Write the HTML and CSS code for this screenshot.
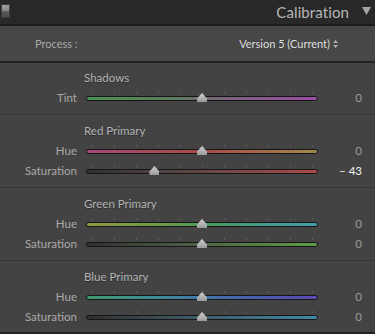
FILE: index.html
```html
<!DOCTYPE html>
<html>
<head>
<meta charset="utf-8">
<link rel="stylesheet" href="styles.css">
</head>
<body>
<div class="panel">
  <div class="header">
    <span class="hdr-icon"></span>
    <span class="title">Calibration</span>
    <svg class="caret" width="9" height="8" viewBox="0 0 9 8"><path d="M0 0 H9 L4.5 8 Z" fill="#a4a4a4"/></svg>
  </div>
  <div class="process">
    <span class="proc-label">Process :</span>
    <span class="proc-value">Version 5 (Current)
      <svg class="updown" width="5" height="8" viewBox="0 0 5 8"><path d="M0 3 L2.5 0 L5 3 Z M0 5 L2.5 8 L5 5 Z" fill="#b0b0b0"/></svg>
    </span>
  </div>

  <div class="section first">
    <div class="sec-title">Shadows</div>
    <div class="row">
      <span class="lbl">Tint</span>
      <div class="slider"><div class="bar g-tint"></div><div class="ticks"></div><span class="thumb" style="left:50%"></span></div>
      <span class="val">0</span>
    </div>
  </div>

  <div class="section">
    <div class="sec-title">Red Primary</div>
    <div class="row">
      <span class="lbl">Hue</span>
      <div class="slider"><div class="bar g-rh"></div><div class="ticks"></div><span class="thumb" style="left:50%"></span></div>
      <span class="val">0</span>
    </div>
    <div class="row">
      <span class="lbl">Saturation</span>
      <div class="slider"><div class="bar g-rs"></div><div class="ticks"></div><span class="thumb" style="left:29.5%"></span></div>
      <span class="val active">– 43</span>
    </div>
  </div>

  <div class="section">
    <div class="sec-title">Green Primary</div>
    <div class="row">
      <span class="lbl">Hue</span>
      <div class="slider"><div class="bar g-gh"></div><div class="ticks"></div><span class="thumb" style="left:50%"></span></div>
      <span class="val">0</span>
    </div>
    <div class="row">
      <span class="lbl">Saturation</span>
      <div class="slider"><div class="bar g-gs"></div><div class="ticks"></div><span class="thumb" style="left:50%"></span></div>
      <span class="val">0</span>
    </div>
  </div>

  <div class="section last">
    <div class="sec-title">Blue Primary</div>
    <div class="row">
      <span class="lbl">Hue</span>
      <div class="slider"><div class="bar g-bh"></div><div class="ticks"></div><span class="thumb" style="left:50%"></span></div>
      <span class="val">0</span>
    </div>
    <div class="row">
      <span class="lbl">Saturation</span>
      <div class="slider"><div class="bar g-bs"></div><div class="ticks"></div><span class="thumb" style="left:50%"></span></div>
      <span class="val">0</span>
    </div>
  </div>
</div>
</body>
</html>
```
FILE: styles.css
```css
html, body {
  margin: 0;
  padding: 0;
  background: #434343;
}
body {
  width: 375px;
  height: 334px;
  overflow: hidden;
  font-family: Lato, "Open Sans", sans-serif;
}
.panel {
  width: 375px;
  height: 334px;
  display: flex;
  flex-direction: column;
  background: #434343;
  border-bottom: 2px solid #222;
  box-sizing: border-box;
}
.header {
  height: 24px;
  background: #282828;
  border-bottom: 2px solid #1b1b1b;
  display: flex;
  align-items: center;
  padding: 0 3px 0 1px;
  flex: none;
}
.hdr-icon {
  width: 7px;
  height: 12px;
  border: 1px solid #3e3e3e;
  background: linear-gradient(#a0a0a0 0, #8a8a8a 45%, #5a5a5a 55%, #4c4c4c 100%);
  margin-top: -2px;
}
.title {
  margin-left: auto;
  color: #b6b6b6;
  font-size: 15px;
  letter-spacing: 0.1px;
  margin-top: -1px;
}
.caret {
  margin-left: 13px;
  margin-right: 1px;
  margin-top: -2px;
}
.process {
  height: 35px;
  background: #474747;
  border-bottom: 2px solid #222;
  display: flex;
  align-items: center;
  font-size: 11px;
  flex: none;
}
.proc-label {
  margin-left: 35px;
  color: #a9a9a9;
}
.proc-value {
  margin-left: auto;
  margin-right: 37px;
  color: #dedede;
  display: flex;
  align-items: center;
  gap: 3px;
}
.section {
  padding: 6px 13px 6px 0;
  border-bottom: 1px solid #383838;
  flex: none;
}
.section.first {
  padding-top: 5px;
}
.section.last {
  border-bottom: none;
  flex: 1;
}
.sec-title {
  height: 20px;
  line-height: 20px;
  margin-left: 84px;
  font-size: 11.5px;
  color: #b4b4b4;
  text-shadow: 0 1px 0 #2e2e2e;
}
.row {
  height: 20px;
  display: grid;
  grid-template-columns: 77px 232px 1fr;
  column-gap: 9px;
  align-items: center;
}
.lbl {
  text-align: right;
  font-size: 11.5px;
  color: #a9a9a9;
  line-height: 20px;
}
.val {
  text-align: right;
  font-size: 11.5px;
  color: #9c9c9c;
  line-height: 20px;
}
.val.active {
  color: #f2f2f2;
}
.slider {
  position: relative;
  height: 20px;
}
.bar {
  position: absolute;
  left: 0;
  right: 0;
  top: 8px;
  height: 3px;
  border: 1px solid #161616;
  border-radius: 3px;
}
.ticks {
  position: absolute;
  left: 6px;
  width: 221px;
  top: 4px;
  height: 2px;
  background: repeating-linear-gradient(to right, #5e5e5e 0, #5e5e5e 1px, transparent 1px, transparent 22px);
}
.thumb {
  position: absolute;
  top: 5px;
  width: 10px;
  height: 9px;
  margin-left: -5px;
  background: linear-gradient(#d0d0d0, #9a9a9a);
  clip-path: polygon(50% 0, 80% 35%, 100% 60%, 100% 100%, 0 100%, 0 60%, 20% 35%);
  filter: drop-shadow(0 0 0.5px #111);
}
.g-tint { background: linear-gradient(to right, #4a9450, #5f7a60 40%, #6e6e6e 50%, #7a627c 60%, #9c4aa6); }
.g-rh { background: linear-gradient(to right, #a44a7c, #a8485c 25%, #aa4a48 50%, #a6684a 75%, #a08a4c); }
.g-rs { background: linear-gradient(to right, #303030, #584646 40%, #ac4a4a); }
.g-gh { background: linear-gradient(to right, #8e9a40, #6a9a4a 35%, #4a9c56 50%, #429a8a 75%, #40a0aa); }
.g-gs { background: linear-gradient(to right, #303030, #4a5a44 40%, #5e9c46); }
.g-bh { background: linear-gradient(to right, #409a6e, #3f8c96 30%, #4276a8 50%, #4a5cae 75%, #5e4ab4); }
.g-bs { background: linear-gradient(to right, #303030, #3e5460 40%, #4088a6); }
```
